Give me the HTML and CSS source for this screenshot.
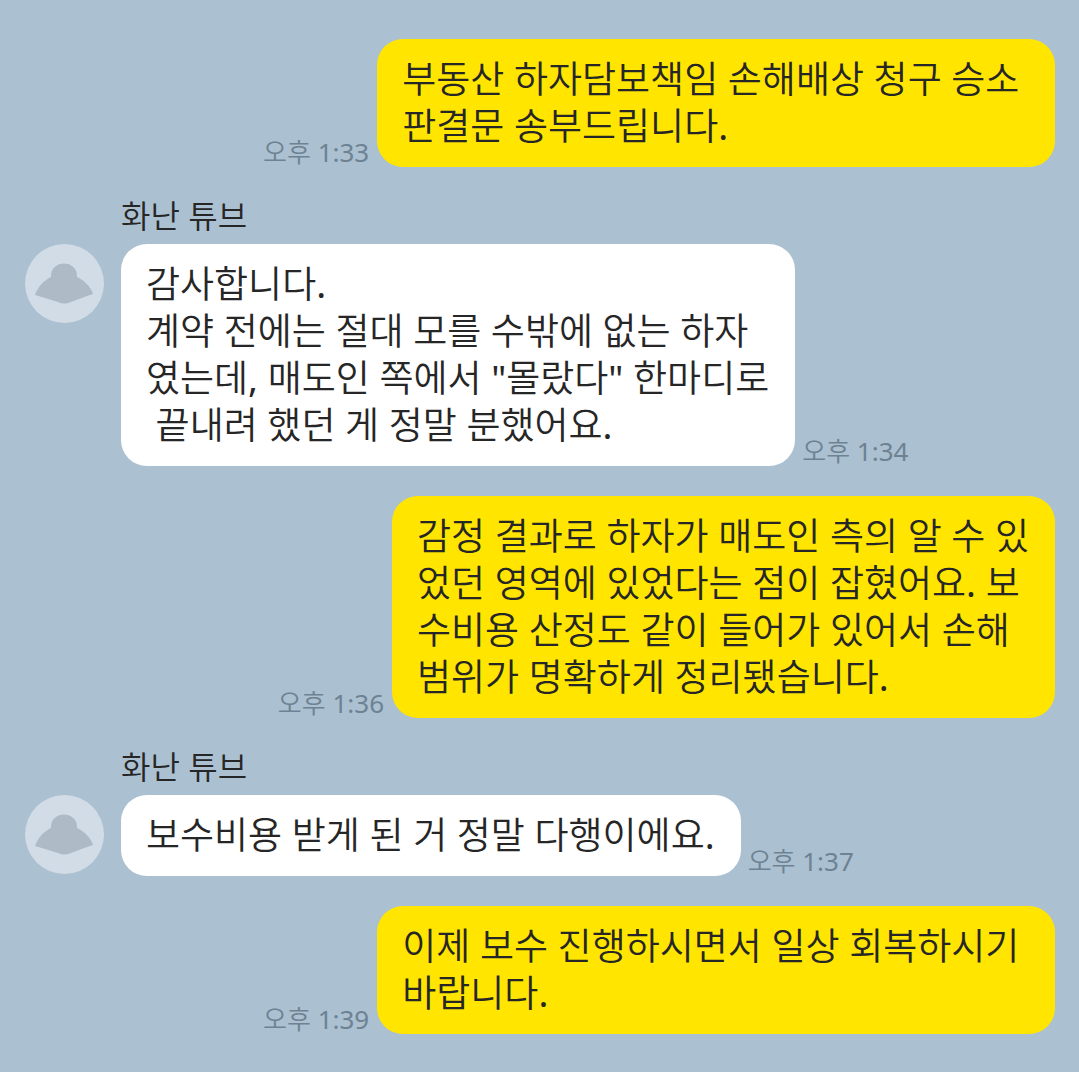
FILE: index.html
```html
<!DOCTYPE html>
<html lang="ko">
<head>
<meta charset="utf-8">
<meta name="viewport" content="width=device-width, initial-scale=1">
<title>화난 튜브</title>
<link rel="stylesheet" href="styles.css">
</head>
<body>
<main class="chat">
  <article class="message sent">
    <time class="time">오후 1:33</time>
    <p class="bubble">부동산 하자담보책임 손해배상 청구 승소&nbsp;<br>판결문 송부드립니다.</p>
  </article>
  <article class="message received">
    <svg class="avatar" viewBox="0 0 79 79" aria-hidden="true"><circle class="avatar-bg" cx="39.500" cy="39.500" r="39.500"/><path class="avatar-fg" d="M26 33C25 15 53 15 52 33C60 37 66 43 68 50Q65 51 62 52L46 58Q39 61 33 58L20 54L10 51C13 43 18 37 26 33Z"/></svg>
    <div class="content">
      <h2 class="name">화난 튜브</h2>
      <div class="line">
        <p class="bubble">감사합니다.<br>계약 전에는 절대 모를 수밖에 없는 하자<br>였는데, 매도인 쪽에서 "몰랐다" 한마디로<br>&nbsp;끝내려 했던 게 정말 분했어요.</p>
        <time class="time">오후 1:34</time>
      </div>
    </div>
  </article>
  <article class="message sent">
    <time class="time">오후 1:36</time>
    <p class="bubble">감정 결과로 하자가 매도인 측의 알 수 있<br>었던 영역에 있었다는 점이 잡혔어요. 보<br>수비용 산정도 같이 들어가 있어서 손해<br>범위가 명확하게 정리됐습니다.</p>
  </article>
  <article class="message received">
    <svg class="avatar" viewBox="0 0 79 79" aria-hidden="true"><circle class="avatar-bg" cx="39.500" cy="39.500" r="39.500"/><path class="avatar-fg" d="M26 33C25 15 53 15 52 33C60 37 66 43 68 50Q65 51 62 52L46 58Q39 61 33 58L20 54L10 51C13 43 18 37 26 33Z"/></svg>
    <div class="content">
      <h2 class="name">화난 튜브</h2>
      <div class="line">
        <p class="bubble">보수비용 받게 된 거 정말 다행이에요.</p>
        <time class="time">오후 1:37</time>
      </div>
    </div>
  </article>
  <article class="message sent">
    <time class="time">오후 1:39</time>
    <p class="bubble">이제 보수 진행하시면서 일상 회복하시기&nbsp;<br>바랍니다.</p>
  </article>
</main>
</body>
</html>
```

FILE: styles.css
```css
* { box-sizing: border-box; }
body {
  margin: 0;
  background: #abc0d1;
  color: #262626;
  font-family: "Noto Sans", "Noto Sans CJK KR DemiLight", "Noto Sans CJK KR", sans-serif;
  font-weight: 400;
}
.chat {
  display: flex;
  flex-direction: column;
  gap: 30px;
  min-height: 100vh;
  padding: 39px 24px 38px 25px;
}
.message, .line { display: flex; }
.sent { justify-content: flex-end; align-items: flex-end; gap: 8px; }
.received { gap: 17px; }
.line { align-items: flex-end; gap: 7px; }
.bubble {
  margin: 0;
  padding: 16px 26px 18px 25px;
  border-radius: 26px;
  background: #fff;
  font-size: 37px;
  line-height: 47px;
}
.sent .bubble { background: #ffe500; }
.name {
  margin: 0 0 10px;
  font-size: 32px;
  font-weight: 400;
  line-height: 37px;
}
.avatar { flex: none; width: 79px; height: 79px; margin-top: 47px; }
.avatar-bg { fill: #d1dce6; }
.avatar-fg { fill: #aebac6; }
.time {
  flex: none;
  color: #6d8292;
  font-size: 26px;
  line-height: 30px;
}
```
